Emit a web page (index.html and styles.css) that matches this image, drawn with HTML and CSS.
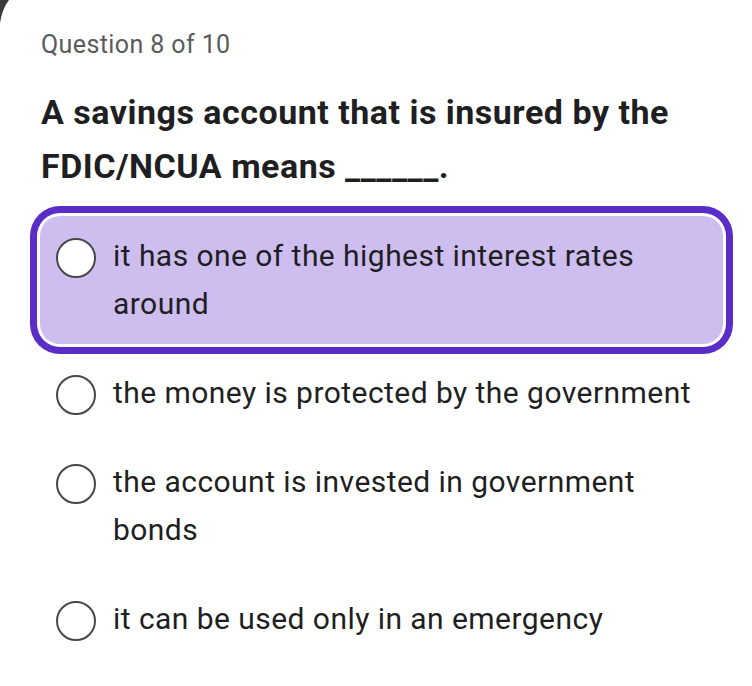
FILE: index.html
```html
<!DOCTYPE html>
<html lang="en">
<head>
<meta charset="utf-8">
<title>Quiz</title>
<link rel="stylesheet" href="styles.css">
</head>
<body>
<svg class="corner" width="30" height="30" viewBox="0 0 30 30" aria-hidden="true"><path d="M0 0 H9 Q2 9 0 23 Z" fill="#3a3a3a"/></svg>
<main class="quiz">
  <p class="counter">Question 8 of 10</p>
  <h1 class="question">A savings account that is insured by the FDIC/NCUA means ______.</h1>
  <ul class="options">
    <li class="option selected"><span class="radio"></span><span class="label">it has one of the highest interest rates around</span></li>
    <li class="option"><span class="radio"></span><span class="label">the money is protected by the government</span></li>
    <li class="option"><span class="radio"></span><span class="label">the account is invested in government bonds</span></li>
    <li class="option"><span class="radio"></span><span class="label">it can be used only in an emergency</span></li>
  </ul>
</main>
</body>
</html>
```
FILE: styles.css
```css
html, body {
  margin: 0;
  padding: 0;
  background: #ffffff;
}
body {
  font-family: Roboto, "Liberation Sans", sans-serif;
  color: #1f1f23;
  position: relative;
  width: 752px;
  height: 686px;
  overflow: hidden;
}
.corner {
  position: absolute;
  left: 0;
  top: 0;
}
.quiz {
  padding: 28px 29px 0 40px;
}
.counter {
  margin: 0;
  font-size: 25px;
  line-height: 34px;
  letter-spacing: 0.4px;
  color: #5a5a5e;
  padding-left: 1px;
}
.question {
  margin: 23px 0 0 1px;
  font-size: 34px;
  font-weight: 700;
  line-height: 54px;
  letter-spacing: 0.5px;
  color: #1f1f23;
}
.options {
  list-style: none;
  margin: 23px 0 0 0;
  padding: 0;
  display: flex;
  flex-direction: column;
  gap: 9px;
}
.option {
  display: flex;
  align-items: flex-start;
  gap: 17px;
  padding: 16px 16px;
  border-radius: 20px;
}
.option.selected {
  background: #cebef0;
  box-shadow: 0 0 0 3px #ffffff, 0 0 0 10px #5a2dc7;
}
.radio {
  flex: none;
  width: 36px;
  height: 36px;
  margin-top: 6px;
  border: 2px solid #48484c;
  border-radius: 50%;
  background: #ffffff;
}
.label {
  font-size: 30px;
  line-height: 48px;
  letter-spacing: 0.45px;
  color: #1f1f23;
}
```
